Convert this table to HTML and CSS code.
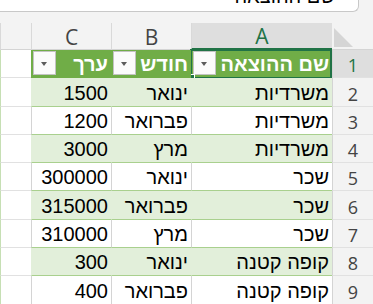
FILE: index.html
```html
<!DOCTYPE html>
<html lang="he">
<head>
<meta charset="utf-8">
<title>הוצאות</title>
<link rel="stylesheet" href="styles.css">
</head>
<body>
<div class="app">
  <div class="formula-row">
    <div class="formula-box"><span class="formula-text">שם ההוצאה</span></div>
  </div>
  <div class="sheet" dir="rtl">
    <div class="corner"><span class="select-all"></span></div>
    <div class="col-head is-selected">A</div>
    <div class="col-head">B</div>
    <div class="col-head">C</div>
    <div class="col-head"></div>

    <div class="row-head is-selected">1</div>
    <div class="cell th active">שם ההוצאה<span class="filter"></span><span class="selection"><span class="handle"></span></span></div>
    <div class="cell th">חודש<span class="filter"></span></div>
    <div class="cell th">ערך<span class="filter"></span></div>
    <div class="cell out"></div>

    <div class="row-head">2</div>
    <div class="cell band">משרדיות</div>
    <div class="cell band">ינואר</div>
    <div class="cell band">1500</div>
    <div class="cell out"></div>

    <div class="row-head">3</div>
    <div class="cell plain">משרדיות</div>
    <div class="cell plain">פברואר</div>
    <div class="cell plain">1200</div>
    <div class="cell out"></div>

    <div class="row-head">4</div>
    <div class="cell band">משרדיות</div>
    <div class="cell band">מרץ</div>
    <div class="cell band">3000</div>
    <div class="cell out"></div>

    <div class="row-head">5</div>
    <div class="cell plain">שכר</div>
    <div class="cell plain">ינואר</div>
    <div class="cell plain">300000</div>
    <div class="cell out"></div>

    <div class="row-head">6</div>
    <div class="cell band">שכר</div>
    <div class="cell band">פברואר</div>
    <div class="cell band">315000</div>
    <div class="cell out"></div>

    <div class="row-head">7</div>
    <div class="cell plain">שכר</div>
    <div class="cell plain">מרץ</div>
    <div class="cell plain">310000</div>
    <div class="cell out"></div>

    <div class="row-head">8</div>
    <div class="cell band">קופה קטנה</div>
    <div class="cell band">ינואר</div>
    <div class="cell band">300</div>
    <div class="cell out"></div>

    <div class="row-head">9</div>
    <div class="cell plain">קופה קטנה</div>
    <div class="cell plain">פברואר</div>
    <div class="cell plain">400</div>
    <div class="cell out"></div>
  </div>
</div>
</body>
</html>
```
FILE: styles.css
```css
html, body {
  margin: 0;
  padding: 0;
  background: #f3f3f3;
  overflow: hidden;
}

.app {
  width: 373px;
  height: 304px;
  overflow: hidden;
}

/* formula bar strip */
.formula-row {
  height: 23px;
  background: #f3f3f3;
}

.formula-box {
  width: 373px;
  margin-left: -14px;
  height: 12px;
  box-sizing: border-box;
  background: #fff;
  border: 1px solid #c8c8c8;
  border-top: none;
  border-radius: 0 0 6px 0;
  overflow: hidden;
  direction: rtl;
  padding-right: 23px;
}

.formula-text {
  display: block;
  font: 20px "Liberation Sans", Arial, sans-serif;
  line-height: 20px;
  margin-top: -14px;
  color: #000;
}

/* worksheet grid, right to left */
.sheet {
  display: grid;
  grid-template-columns: 41px 141px 80px 80px 31px;
  grid-template-rows: 27px repeat(9, 28.3px);
  background: #fff;
}

.corner {
  position: relative;
  background: #f3f3f3;
  border-bottom: 1px solid #d4d4d4;
  box-sizing: border-box;
}

.select-all {
  position: absolute;
  left: 2px;
  top: 5px;
  width: 0;
  height: 0;
  border-top: 19px solid transparent;
  border-left: 19px solid #d5d5d5;
}

.col-head {
  display: flex;
  align-items: flex-end;
  justify-content: center;
  box-sizing: border-box;
  background: #f3f3f3;
  border-left: 1px solid #d9d9d9;
  border-bottom: 1px solid #d4d4d4;
  font: 21px "Open Sans", "Noto Sans", sans-serif;
  line-height: 21px;
  padding-bottom: 1px;
  color: #444;
}

.col-head.is-selected {
  background: #dedede;
  color: #217346;
  border-bottom: 2px solid #217346;
}

.row-head {
  display: flex;
  align-items: flex-end;
  justify-content: center;
  box-sizing: border-box;
  background: #f3f3f3;
  border-bottom: 1px solid #e1e1e1;
  border-left: 1px solid #d4d4d4;
  font: 18px "Open Sans", "Noto Sans", sans-serif;
  line-height: 18px;
  padding-bottom: 3px;
  color: #444;
}

.row-head.is-selected {
  background: #dedede;
  color: #217346;
}

.cell {
  position: relative;
  display: flex;
  align-items: flex-end;
  box-sizing: border-box;
  padding: 0 3px 3px 3px;
  font: 20px "Liberation Sans", Arial, sans-serif;
  line-height: 20px;
  color: #000;
  white-space: nowrap;
  border-bottom: 1px solid #a9d08e;
  border-left: 1px solid #d4d4d4;
}

.cell.band {
  background: #e2efda;
  border-left-color: #e2efda;
}

.cell.plain {
  background: #fff;
}

.cell.out {
  background: #fff;
  border-bottom-color: #e1e1e1;
  border-left-color: #c6dfb4;
}

.cell.th {
  background: #70ad47;
  color: #fff;
  font-weight: bold;
  border-left-color: #70ad47;
  border-bottom-color: #70ad47;
}

/* autofilter dropdown */
.filter {
  position: relative;
  margin-right: auto;
  margin-left: -2px;
  align-self: center;
  width: 23px;
  height: 24px;
  margin-bottom: -2px;
  box-sizing: border-box;
  background: #fbfbfb;
  border: 1px solid #c3c3c3;
}

.filter::after {
  content: "";
  position: absolute;
  left: 7px;
  top: 10px;
  border-top: 4px solid #5c5c5c;
  border-left: 3.5px solid transparent;
  border-right: 3.5px solid transparent;
}

/* active cell outline */
.selection {
  position: absolute;
  left: -2px;
  top: -1px;
  right: 0;
  bottom: -2px;
  border: 2px solid #217346;
  pointer-events: none;
}

.handle {
  position: absolute;
  left: -4px;
  bottom: -4px;
  width: 5px;
  height: 5px;
  background: #217346;
  border: 1px solid #fff;
}
```
